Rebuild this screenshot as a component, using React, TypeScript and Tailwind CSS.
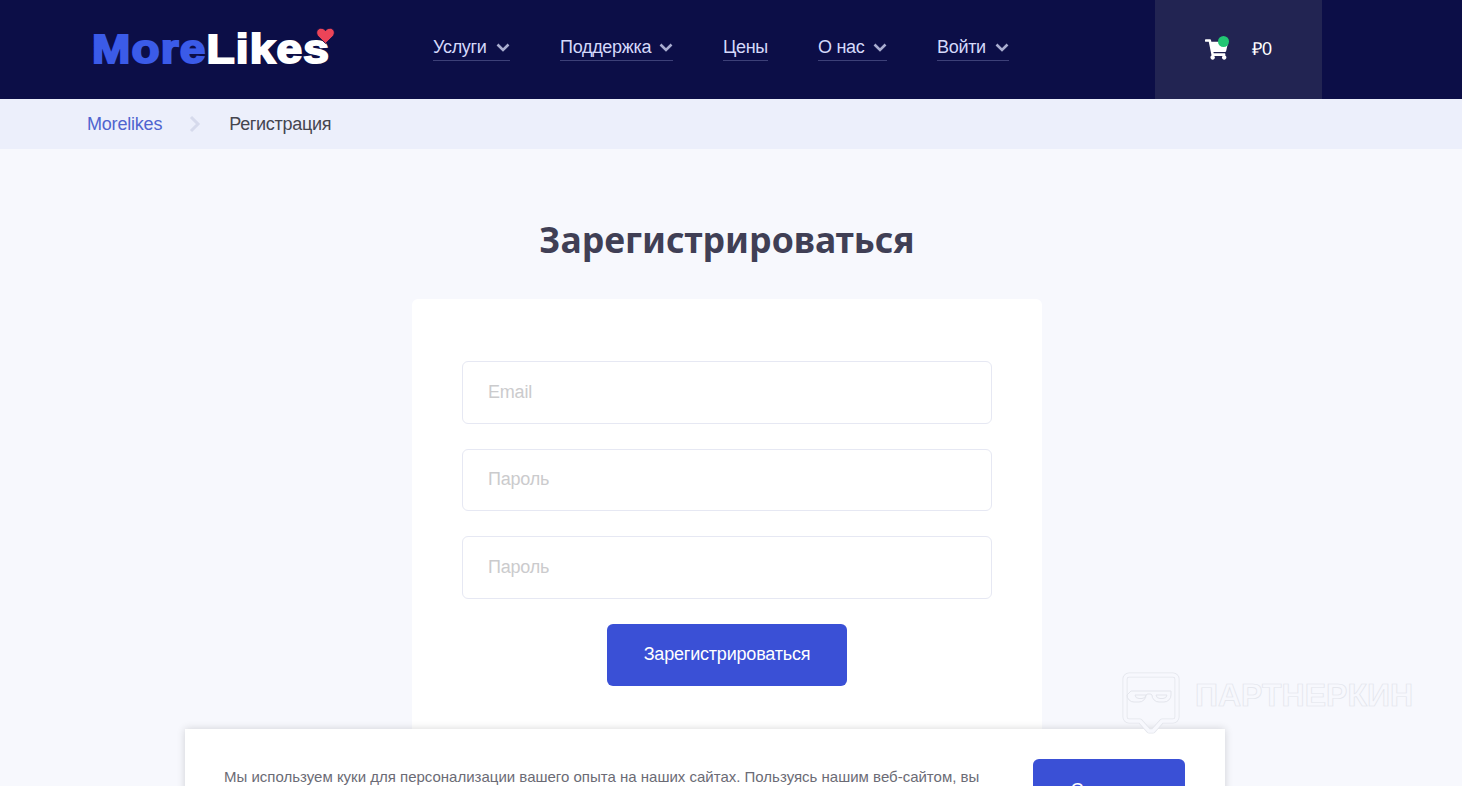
import React from "react";
import { FaShoppingCart } from "react-icons/fa";

const sans = "font-['Liberation_Sans',Arial,sans-serif]";

function Chevron({ className = "" }: { className?: string }) {
  return (
    <svg width="14" height="9" viewBox="0 0 14 9" fill="none" className={className}>
      <path d="M1.5 1.5 7 7l5.5-5.500" stroke="#a9add0" strokeWidth="2.6" />
    </svg>
  );
}

function NavItem({ label, arrow = true, className = "" }: { label: string; arrow?: boolean; className?: string }) {
  return (
    <a className={`flex h-[28px] items-center justify-between border-b border-[#3d4078] text-[18px] leading-[24px] tracking-[-0.3px] text-[#d5d9fb] ${className}`}>
      <span>{label}</span>
      {arrow && <Chevron className="mt-[2px]" />}
    </a>
  );
}

function Field({ placeholder }: { placeholder: string }) {
  return (
    <div className="flex h-[62.5px] w-full shrink-0 items-center rounded-[6px] border border-[#e6e8f3] bg-white pl-[25px] text-[18px] tracking-[-0.2px] text-[#cbcbcd]">
      {placeholder}
    </div>
  );
}

export default function App() {
  return (
    <div className={`relative h-[786px] w-full overflow-hidden bg-[#f7f8fd] ${sans}`}>
      <header className="flex h-[99px] bg-[#0c0e47]">
        <a className="relative ml-[92px] mt-[27px] h-[44px] w-[245px] whitespace-nowrap">
          <span className="block origin-left scale-x-[1.15] text-[40px] font-bold leading-[44px] tracking-[1px] [-webkit-text-stroke:2px_currentColor]">
            <span className="text-[#3b5be8]">More</span>
            <span className="text-white">Likes</span>
          </span>
          <svg width="19" height="17" viewBox="0 0 18 16" className="absolute left-[224px] top-0">
            <path d="M9 15.5 2 8.7C-.5 6.2.6 1.500 4.400 1.200 6.300 1 8 2 9 3.500 10 2 11.700 1 13.600 1.200 17.400 1.500 18.500 6.200 16 8.700Z" fill="#ec4458" stroke="#0c0e47" strokeWidth="0.8" />
          </svg>
        </a>
        <nav className="ml-[96px] mt-[33px] flex h-[28px] items-start gap-[50px]">
          <NavItem label="Услуги" className="w-[77px]" />
          <NavItem label="Поддержка" className="w-[113px]" />
          <NavItem label="Цены" arrow={false} className="w-[45px]" />
          <NavItem label="О нас" className="w-[69px]" />
          <NavItem label="Войти" className="w-[72px]" />
        </nav>
        <div className="ml-[146px] flex w-[167px] items-center bg-[#222452] pl-[50px]">
          <div className="relative">
            <FaShoppingCart className="text-[23px] text-white" />
            <span className="absolute left-[13px] top-[-2px] h-[11px] w-[11px] rounded-full bg-[#22c673]" />
          </div>
          <span className="ml-[24px] text-[18px] tracking-[-0.1px] text-white">₽0</span>
        </div>
      </header>

      <div className="flex h-[50px] items-center bg-[#eceffb] pl-[87px] text-[18px] tracking-[-0.2px]">
        <a className="text-[#4f64cf]">Morelikes</a>
        <svg width="12" height="18" viewBox="0 0 12 18" fill="none" className="ml-[27px] mr-[28px]">
          <path d="M2 2l7 7-7 7" stroke="#d6daec" strokeWidth="3" />
        </svg>
        <span className="tracking-[-0.3px] text-[#45454f]">Регистрация</span>
      </div>

      <main className="flex flex-col items-center">
        <h1 className="mr-[8px] mt-[63px] h-[54px] text-center font-['Noto_Sans',sans-serif] text-[35.6px] font-bold leading-[54px] text-[#403f55]">
          Зарегистрироваться
        </h1>
        <section className="mr-[8px] mt-[33px] flex h-[520px] w-[630px] flex-col items-center gap-[25px] rounded-[6px] bg-white px-[50px] pt-[62px]">
          <Field placeholder="Email" />
          <Field placeholder="Пароль" />
          <Field placeholder="Пароль" />
          <button className="flex h-[62px] w-[240px] shrink-0 items-center justify-center rounded-[6px] bg-[#3a50d6] text-[18px] tracking-[-0.2px] text-white">
            Зарегистрироваться
          </button>
        </section>
      </main>

      <div className="absolute left-[185px] top-[729px] flex h-[200px] w-[1040px] items-start justify-between bg-white pl-[39px] pr-[40px] pt-[30px] shadow-[0_0_8px_rgba(0,0,0,0.16)]">
        <p className="mt-[6px] w-[770px] text-[15px] leading-[24px] text-[#6b6b75]">
          Мы используем куки для персонализации вашего опыта на наших сайтах. Пользуясь нашим веб-сайтом, вы соглашаетесь на использование файлов cookie.
        </p>
        <button className="flex h-[62px] w-[152px] items-center justify-center rounded-[6px] bg-[#3a50d6] text-[18px] tracking-[-0.2px] text-white">
          Согласен
        </button>
      </div>

      <div className="absolute left-[1122px] top-[672px] flex items-start gap-[15px]">
        <svg width="58" height="62" viewBox="0 0 58 62" fill="none" strokeLinejoin="round">
          <path d="M7 3h44a4 4 0 0 1 4 4v38a4 4 0 0 1-4 4H40L31 59H27L18 49H7a4 4 0 0 1-4-4V7a4 4 0 0 1 4-4Z" stroke="#e3e5ec" strokeWidth="5" />
          <path d="M7 3h44a4 4 0 0 1 4 4v38a4 4 0 0 1-4 4H40L31 59H27L18 49H7a4 4 0 0 1-4-4V7a4 4 0 0 1 4-4Z" stroke="#f7f8fd" strokeWidth="3.4" />
          <path d="M9 19h40v4a7 7 0 0 1-7 7h-5a7 7 0 0 1-7-7q-1-1-2-1h-2q-1 0-2 1a7 7 0 0 1-7 7h-5a7 7 0 0 1-7-7Z" stroke="#e3e5ec" strokeWidth="1" />
          <path d="M13 23h11a4 4 0 0 1-4 3.500h-3a4 4 0 0 1-4-3.500ZM34 23h11a4 4 0 0 1-4 3.500h-3a4 4 0 0 1-4-3.500Z" stroke="#e3e5ec" strokeWidth="1" />
        </svg>
        <span className="mt-[5px] text-[32px] font-bold leading-[36px] text-transparent [-webkit-text-stroke:0.7px_#e2e4eb]">
          ПАРТНЕРКИН
        </span>
      </div>
    </div>
  );
}
